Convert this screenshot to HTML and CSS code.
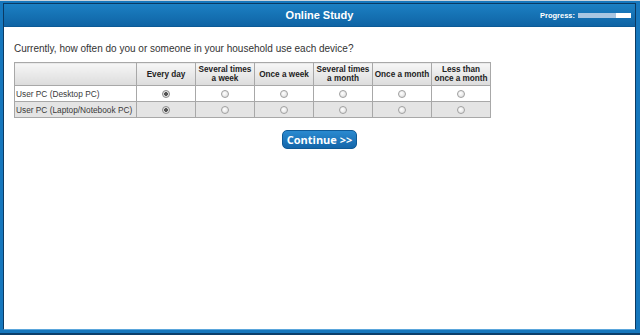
FILE: index.html
```html
<!DOCTYPE html>
<html lang="en">
<head>
    <meta charset="UTF-8">
    <meta name="viewport" content="width=device-width, initial-scale=1.0">
    <title>Online Study</title>
    <link rel="stylesheet" href="styles.css">
</head>
<body>
    <div class="frame">
        <div class="panel">
            <div class="header">
                <div class="title">Online Study</div>
                <div class="progress">
                    <span>Progress:</span>
                    <div class="bar"><div class="fill" style="width: 72%"></div></div>
                </div>
            </div>

            <div class="content">
                <p class="question">Currently, how often do you or someone in your household use each device?</p>

                <table class="grid">
                    <tr>
                        <th class="label-col"></th>
                        <th>Every day</th>
                        <th>Several times<br>a week</th>
                        <th>Once a week</th>
                        <th>Several times<br>a month</th>
                        <th>Once a month</th>
                        <th>Less than<br>once a month</th>
                    </tr>
                    <tr>
                        <td class="label">User PC (Desktop PC)</td>
                        <td><input type="radio" name="q1" checked></td>
                        <td><input type="radio" name="q1"></td>
                        <td><input type="radio" name="q1"></td>
                        <td><input type="radio" name="q1"></td>
                        <td><input type="radio" name="q1"></td>
                        <td><input type="radio" name="q1"></td>
                    </tr>
                    <tr class="alt">
                        <td class="label">User PC (Laptop/Notebook PC)</td>
                        <td><input type="radio" name="q2" checked></td>
                        <td><input type="radio" name="q2"></td>
                        <td><input type="radio" name="q2"></td>
                        <td><input type="radio" name="q2"></td>
                        <td><input type="radio" name="q2"></td>
                        <td><input type="radio" name="q2"></td>
                    </tr>
                </table>
            </div>

            <div class="actions">
                <button type="button" class="continue">Continue &gt;&gt;</button>
            </div>
        </div>
    </div>
</body>
</html>
```

FILE: styles.css
```css
body {
    margin: 0;
    padding: 0;
    font-family: "Liberation Sans", Arial, sans-serif;
    background: #ffffff;
}
.frame {
    height: 335px;
    box-sizing: border-box;
    background: #1677bd;
    border-top: 1px solid #c9d3dc;
    border-bottom: 2px solid #0b3f6b;
    padding: 2px 4px 3px 3px;
}
.panel {
    height: 100%;
    box-sizing: border-box;
    border: 1px solid #0b3a63;
    border-bottom-color: #5aa6dc;
    background: #ffffff;
    display: flex;
    flex-direction: column;
}
.header {
    height: 22px;
    background: linear-gradient(#1c80c3, #0f64a5);
    border-bottom: 1px solid #0c5a96;
    display: flex;
    align-items: center;
    position: relative;
}
.title {
    flex: 1;
    text-align: center;
    color: #ffffff;
    font-weight: bold;
    font-size: 11px;
}
.progress {
    position: absolute;
    right: 4px;
    top: 7px;
    display: flex;
    align-items: center;
    gap: 3px;
    color: #ffffff;
    font-weight: bold;
    font-size: 7.5px;
}
.bar {
    width: 53px;
    height: 5px;
    background: #ffffff;
}
.fill {
    height: 100%;
    background: #a9c6e2;
}
.content {
    padding: 0 10px;
}
.question {
    margin: 16px 0 8px;
    font-size: 10px;
    color: #333333;
}
.grid {
    border-collapse: collapse;
    table-layout: fixed;
    width: 476px;
    font-size: 9px;
    color: #333333;
}
.grid th {
    width: 58px;
    height: 22px;
    padding: 0;
    border: 1px solid #a8a8a8;
    background: linear-gradient(#f6f6f6, #dcdcdc);
    font-weight: bold;
    font-size: 8.2px;
    line-height: 9px;
    color: #222222;
    white-space: nowrap;
    overflow: hidden;
}
.grid th.label-col {
    width: 121px;
}
.grid td {
    height: 15px;
    padding: 0;
    border: 1px solid #a8a8a8;
    text-align: center;
    background: #ffffff;
}
.grid tr.alt td {
    background: #e4e4e4;
}
.grid td.label {
    text-align: left;
    padding-left: 1px;
    font-size: 8.3px;
    color: #3a3a3a;
    white-space: nowrap;
    overflow: hidden;
}
.grid input {
    appearance: none;
    -webkit-appearance: none;
    margin: 0;
    width: 8px;
    height: 8px;
    border: 1px solid #a0a0a0;
    border-radius: 50%;
    background: radial-gradient(circle at 40% 40%, #ffffff, #d8d8d8);
    vertical-align: middle;
}
.grid input:checked {
    background: radial-gradient(circle, #555555 0, #555555 1.6px, #e8e8e8 2.2px, #cfcfcf);
    border-color: #8c8c8c;
}
.actions {
    display: flex;
    justify-content: center;
    margin-top: 12px;
}
.continue {
    font-family: "Open Sans", "Liberation Sans", Arial, sans-serif;
    font-weight: bold;
    font-size: 11px;
    color: #ffffff;
    background: linear-gradient(#2a8ad0, #1466aa);
    border: 1px solid #0f5a96;
    border-radius: 5px;
    padding: 0 4px;
    height: 19px;
    line-height: 17px;
    cursor: pointer;
}
```
